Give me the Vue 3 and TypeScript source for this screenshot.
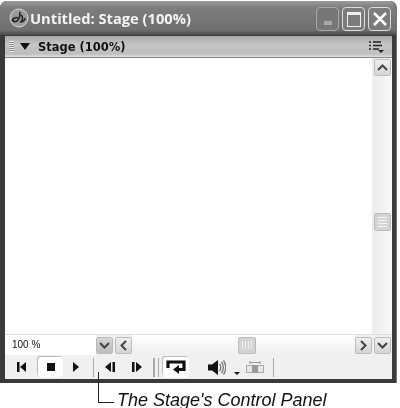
<script setup lang="ts">
// playback buttons in the stage's control strip
const zoomLabel = '100 %'
</script>

<template>
  <div class="page">
    <div class="window">
      <div class="titlebar">
        <svg class="app-icon" width="20" height="20" viewBox="0 0 20 20">
          <circle cx="10" cy="10" r="9" fill="#9a9a9a" stroke="#d8d8d8" />
          <path d="M3 13c1-3 4-4 6-3M11 4c0 5-1 8-3 9-2 1-4 1-4-1M12 7c2 1 2 5 0 7 2 0 4-2 4-4" fill="none" stroke="#222" stroke-width="1.600" />
        </svg>
        <span class="title">Untitled: Stage (100%)</span>
        <div class="win-buttons">
          <div class="win-btn min"><span class="min-bar"></span></div>
          <div class="win-btn max"><span class="max-box"></span></div>
          <div class="win-btn close">
            <svg width="16" height="16" viewBox="0 0 16 16"><path d="M2 2l12 12M14 2L2 14" stroke="#fff" stroke-width="2.6" /></svg>
          </div>
        </div>
      </div>

      <div class="panel-head">
        <span class="grip"></span>
        <span class="tri-down"></span>
        <span class="panel-title">Stage (100%)</span>
        <svg class="options" width="15" height="12" viewBox="0 0 15 12">
          <path d="M0 1h2M4 1h8M0 4.500h2M4 4.500h9M0 8h2M4 8h6" stroke="#222" stroke-width="1.400" />
          <path d="M9 9h6l-3 3z" fill="#222" />
        </svg>
      </div>

      <div class="stage-row">
        <div class="stage"></div>
        <div class="vscroll">
          <div class="sb-btn">
            <svg width="11" height="7" viewBox="0 0 11 7"><path d="M1 6l4.500-4.500L10 6" fill="none" stroke="#444" stroke-width="2" /></svg>
          </div>
          <div class="thumb-v">
            <span></span><span></span><span></span><span></span>
          </div>
        </div>
      </div>

      <div class="hscroll-row">
        <div class="zoom-box">{{ zoomLabel }}</div>
        <div class="sb-btn tinted">
          <svg width="11" height="7" viewBox="0 0 11 7"><path d="M1 1l4.500 4.500L10 1" fill="none" stroke="#444" stroke-width="2" /></svg>
        </div>
        <div class="hscroll">
          <div class="sb-btn">
            <svg width="7" height="11" viewBox="0 0 7 11"><path d="M6 1L1.500 5.500 6 10" fill="none" stroke="#444" stroke-width="2" /></svg>
          </div>
          <div class="track">
            <div class="thumb-h"><span></span><span></span><span></span><span></span></div>
          </div>
          <div class="sb-btn">
            <svg width="7" height="11" viewBox="0 0 7 11"><path d="M1 1l4.500 4.500L1 10" fill="none" stroke="#444" stroke-width="2" /></svg>
          </div>
        </div>
        <div class="sb-btn corner">
          <svg width="11" height="7" viewBox="0 0 11 7"><path d="M1 1l4.500 4.500L10 1" fill="none" stroke="#444" stroke-width="2" /></svg>
        </div>
      </div>

      <div class="controls">
        <div class="ctl first">
          <svg width="9" height="10" viewBox="0 0 9 10"><path d="M0 0h2.500v10H0zM9 0v10L3 5z" fill="#111" /></svg>
        </div>
        <div class="ctl stop"><span class="stop-square"></span></div>
        <div class="ctl play">
          <svg width="6" height="10" viewBox="0 0 6 10"><path d="M0 0l6 5-6 5z" fill="#111" /></svg>
        </div>
        <span class="sep back-sep"></span>
        <div class="ctl step-back">
          <svg width="10" height="10" viewBox="0 0 10 10"><path d="M6 0v10L0 5zM7.500 0H10v10H7.500z" fill="#111" /></svg>
        </div>
        <div class="ctl step-fwd">
          <svg width="10" height="10" viewBox="0 0 10 10"><path d="M0 0h2.500v10H0zM4 0l6 5-6 5z" fill="#111" /></svg>
        </div>
        <span class="sep double"></span>
        <span class="sep"></span>
        <div class="ctl loop">
          <svg width="20" height="14" viewBox="0 0 20 14">
            <path d="M12 9.500h6V2H2v6" fill="none" stroke="#111" stroke-width="3.200" />
            <path d="M13 5v9L7 9.500z" fill="#111" />
          </svg>
        </div>
        <div class="ctl volume">
          <svg width="18" height="17" viewBox="0 0 18 17">
            <path d="M0 5.500h4L10 1v15l-6-4.500H0z" fill="#111" />
            <path d="M11.500 5c1.500 2 1.500 5 0 7M13.500 3c2.500 3 2.500 8 0 11M15.500 1.500c3 4 3 10 0 14" fill="none" stroke="#777" stroke-width="1.300" />
          </svg>
        </div>
        <span class="tri-small"></span>
        <svg class="quality" width="18" height="12" viewBox="0 0 18 12">
          <path d="M4 0v3M14 0v3M4 1.500h10" stroke="#999" fill="none" />
          <rect x="0.500" y="4.500" width="17" height="7" fill="#e8e8e8" stroke="#aaa" />
          <rect x="6" y="4" width="6" height="8" fill="#9a9a9a" />
        </svg>
        <span class="sep last-sep"></span>
      </div>

      <span class="leader"></span>
    </div>

    <div class="caption">The Stage's Control Panel</div>
  </div>
</template>

<style scoped>
.page {
  width: 400px;
  height: 408px;
  background: #fff;
  overflow: hidden;
  font-family: "DejaVu Sans", sans-serif;
  filter: blur(0.35px);
}

.window {
  position: relative;
  width: 397px;
  height: 382px;
  margin-top: 1px;
  display: flex;
  flex-direction: column;
  box-sizing: border-box;
  background: #3a3a3a;
  border-radius: 7px 7px 0 0;
  padding: 0 4px 4px 5px;
  border-right: 1px solid #777;
}

.titlebar {
  height: 34px;
  margin: 0 -4px 0 -5px;
  padding: 0 5px 0 9px;
  display: flex;
  align-items: center;
  background: linear-gradient(#9a9a9a, #7d7d7d 20%, #6f6f6f 85%, #4a4a4a);
  border-radius: 7px 7px 0 0;
  flex: none;
}

.app-icon {
  margin-right: 1px;
}

.title {
  color: #f4f4f4;
  font-family: "Open Sans", sans-serif;
  font-size: 14.700px;
  font-weight: 700;
}

.win-buttons {
  margin-left: auto;
  display: flex;
  gap: 3px;
  margin-top: 2px;
}

.win-btn {
  width: 23px;
  height: 24px;
  box-sizing: border-box;
  border-radius: 4px;
  border: 1px solid #ddd;
  display: flex;
  align-items: center;
  justify-content: center;
  background: #7c7c7c;
}

.win-btn.min {
  border-color: #a8a8a8;
  background: #777;
}

.min-bar {
  width: 8px;
  height: 4px;
  margin-top: 7px;
  background: #aaa;
}

.max-box {
  width: 12px;
  height: 11px;
  border: 1px solid #eee;
  border-top-width: 3px;
}

.panel-head {
  height: 22px;
  margin-top: 1px;
  display: flex;
  align-items: center;
  padding-left: 4px;
  background: linear-gradient(#a8a8a8, #c6c6c6 40%, #bdbdbd 85%, #e2e2e2);
  border-bottom: 1px solid #888;
  flex: none;
  box-sizing: border-box;
}

.grip {
  width: 5px;
  height: 11px;
  margin-right: 6px;
  background: repeating-linear-gradient(#eee 0 1px, #888 1px 2px);
}

.tri-down {
  width: 0;
  height: 0;
  border-left: 5px solid transparent;
  border-right: 5px solid transparent;
  border-top: 7px solid #111;
  margin-right: 8px;
}

.panel-title {
  font-size: 11.500px;
  font-weight: 700;
  color: #111;
}

.options {
  margin-left: auto;
  margin-right: 8px;
}

.stage-row {
  flex: 1;
  display: flex;
  min-height: 0;
}

.stage {
  flex: 1;
  background: #fff;
}

.vscroll {
  width: 20px;
  display: flex;
  flex-direction: column;
  align-items: center;
  background: linear-gradient(90deg, #ececec, #f8f8f8);
  padding-top: 1px;
  box-sizing: border-box;
}

.sb-btn {
  width: 17px;
  height: 17px;
  flex: none;
  display: flex;
  align-items: center;
  justify-content: center;
  box-sizing: border-box;
  border: 1px solid #fff;
  outline: 1px solid #bbb;
  outline-offset: -1px;
  border-radius: 2px;
  background: linear-gradient(#f0f0f0, #d4d4d4);
}

.thumb-v {
  margin-top: 137px;
  width: 17px;
  height: 18px;
  box-sizing: border-box;
  display: flex;
  flex-direction: column;
  gap: 2px;
  align-items: center;
  justify-content: center;
  background: #d4d4d4;
  border: 1px solid #bbb;
  border-radius: 2px;
}

.thumb-v span {
  width: 9px;
  height: 1px;
  background: #f5f5f5;
}

.hscroll-row {
  height: 21px;
  flex: none;
  display: flex;
  align-items: center;
  background: #f1f1f1;
  border-top: 1px solid #ddd;
  box-sizing: border-box;
}

.zoom-box {
  width: 91px;
  height: 20px;
  box-sizing: border-box;
  padding-left: 7px;
  line-height: 20px;
  background: #fff;
  font-size: 10px;
  color: #111;
  font-family: "Liberation Sans", sans-serif;
}

.sb-btn.tinted {
  background: linear-gradient(#d4d4d4, #bcbcbc);
}

.hscroll {
  flex: 1;
  min-width: 0;
  display: flex;
  align-items: center;
  padding-left: 2px;
}

.track {
  flex: 1;
  display: flex;
  justify-content: center;
  padding-left: 6px;
  box-sizing: border-box;
  height: 20px;
  align-items: center;
  background: linear-gradient(#fff, #efefef);
}

.thumb-h {
  width: 18px;
  height: 17px;
  box-sizing: border-box;
  display: flex;
  gap: 2px;
  align-items: center;
  justify-content: center;
  background: #d4d4d4;
  border: 1px solid #bbb;
  border-radius: 2px;
}

.thumb-h span {
  width: 1px;
  height: 8px;
  background: #f0f0f0;
}

.sb-btn.corner {
  margin-left: 2px;
  margin-right: 1px;
}

.controls {
  height: 24px;
  flex: none;
  display: flex;
  align-items: center;
  background: #f0f0f0;
  box-sizing: border-box;
}

.ctl {
  display: flex;
  align-items: center;
  justify-content: center;
  flex: none;
}

.first {
  margin-left: 12px;
}

.stop {
  width: 25px;
  height: 20px;
  margin-left: 12px;
  background: #fff;
  border-radius: 3px;
  box-shadow: -1px -1px 0 #bbb;
}

.stop-square {
  width: 8px;
  height: 8px;
  background: #111;
}

.play {
  margin-left: 10px;
}

.sep {
  width: 1px;
  height: 19px;
  background: #aaa;
  flex: none;
}

.back-sep {
  margin-left: 14px;
}

.step-back {
  margin-left: 11px;
}

.step-fwd {
  margin-left: 17px;
}

.sep.double {
  margin-left: 11px;
  width: 2px;
}

.sep.double + .sep {
  margin-left: 3px;
}

.loop {
  width: 26px;
  height: 20px;
  margin-left: 4px;
  background: #fff;
  border-radius: 3px;
  box-shadow: -1px -1px 0 #bbb;
}

.volume {
  margin-left: 19px;
}

.tri-small {
  width: 0;
  height: 0;
  margin: 12px 0 0 8px;
  border-left: 3px solid transparent;
  border-right: 3px solid transparent;
  border-top: 3px solid #111;
}

.quality {
  margin-left: 6px;
}

.last-sep {
  margin-left: 9px;
}

/* pointer from the caption up to the control strip */
.leader {
  position: absolute;
  left: 98px;
  top: 371px;
  width: 15px;
  height: 30px;
  border-left: 1px solid #222;
  border-bottom: 1px solid #222;
}

.caption {
  margin: 9px 0 0 117px;
  font-family: "Liberation Sans", sans-serif;
  font-style: italic;
  font-size: 18px;
  line-height: 16px;
  color: #111;
}
</style>
